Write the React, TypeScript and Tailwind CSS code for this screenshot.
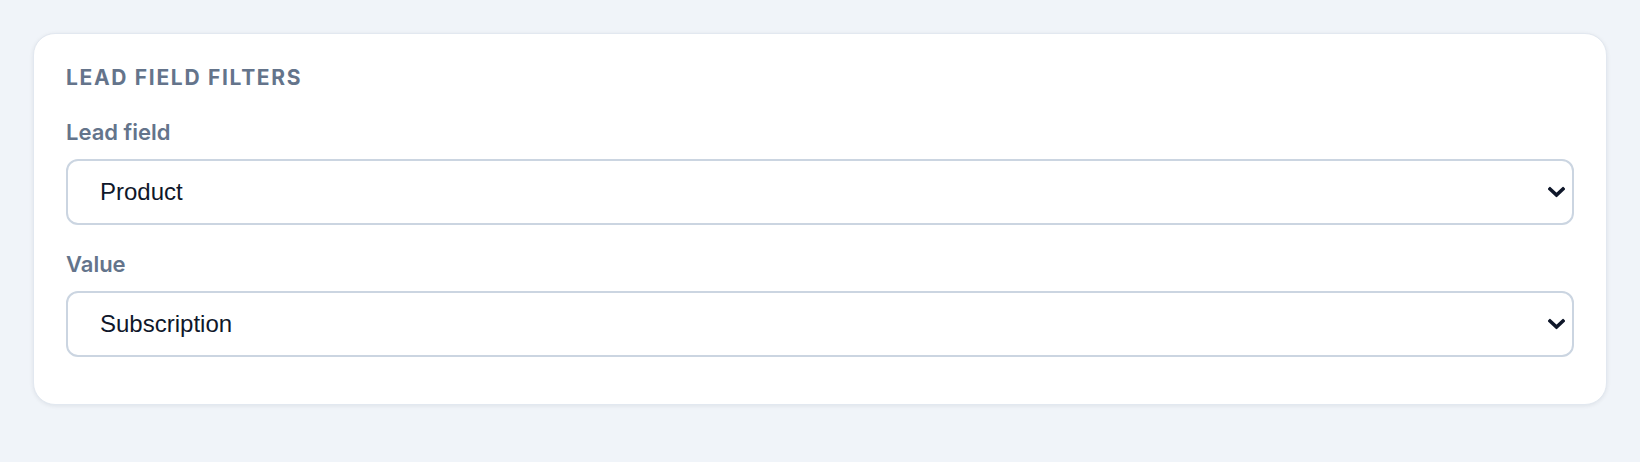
const fields = [
  { label: "Lead field", value: "Product", options: ["Product", "Source", "Status"] },
  { label: "Value", value: "Subscription", options: ["Subscription", "One-time", "Trial"] },
];

const Chevron = () => (
  <svg
    className="pointer-events-none absolute right-[9px] top-1/2 -translate-y-1/2"
    width="17"
    height="11"
    viewBox="0 0 17 11"
    fill="none"
  >
    <path d="M2 2.5 L8.5 8.5 L15 2.5" stroke="#0f172a" strokeWidth="3.6" strokeLinecap="square" />
  </svg>
);

const LeadFieldFilters = () => {
  return (
    <section className="w-full min-h-screen bg-[#f0f4f9] p-[33px] font-['Inter',sans-serif]">
      <div className="flex flex-col bg-white border border-[#e2e8f0] rounded-[22px] shadow-[0_1px_4px_rgba(15,23,42,0.08)] px-[32px] pt-[32px] pb-[47px]">
        <h2 className="text-[21px] leading-[24px] font-bold uppercase tracking-[0.08em] text-[#64748b]">
          Lead field filters
        </h2>

        <div className="flex flex-col gap-[27px] mt-[30px]">
          {fields.map((f) => (
            <div key={f.label} className="flex flex-col gap-[15px]">
              <label className="text-[22px] leading-[24px] font-semibold text-[#64748b]">{f.label}</label>
              <div className="relative">
                <select
                  defaultValue={f.value}
                  className="appearance-none w-full h-[66px] rounded-[12px] border-2 border-[#cbd5e1] bg-white pl-[32px] pr-10 text-[24px] text-[#0f172a] font-['Liberation_Sans',Arial,sans-serif] outline-none"
                >
                  {f.options.map((o) => (
                    <option key={o}>{o}</option>
                  ))}
                </select>
                <Chevron />
              </div>
            </div>
          ))}
        </div>
      </div>
    </section>
  );
};

export default LeadFieldFilters;
